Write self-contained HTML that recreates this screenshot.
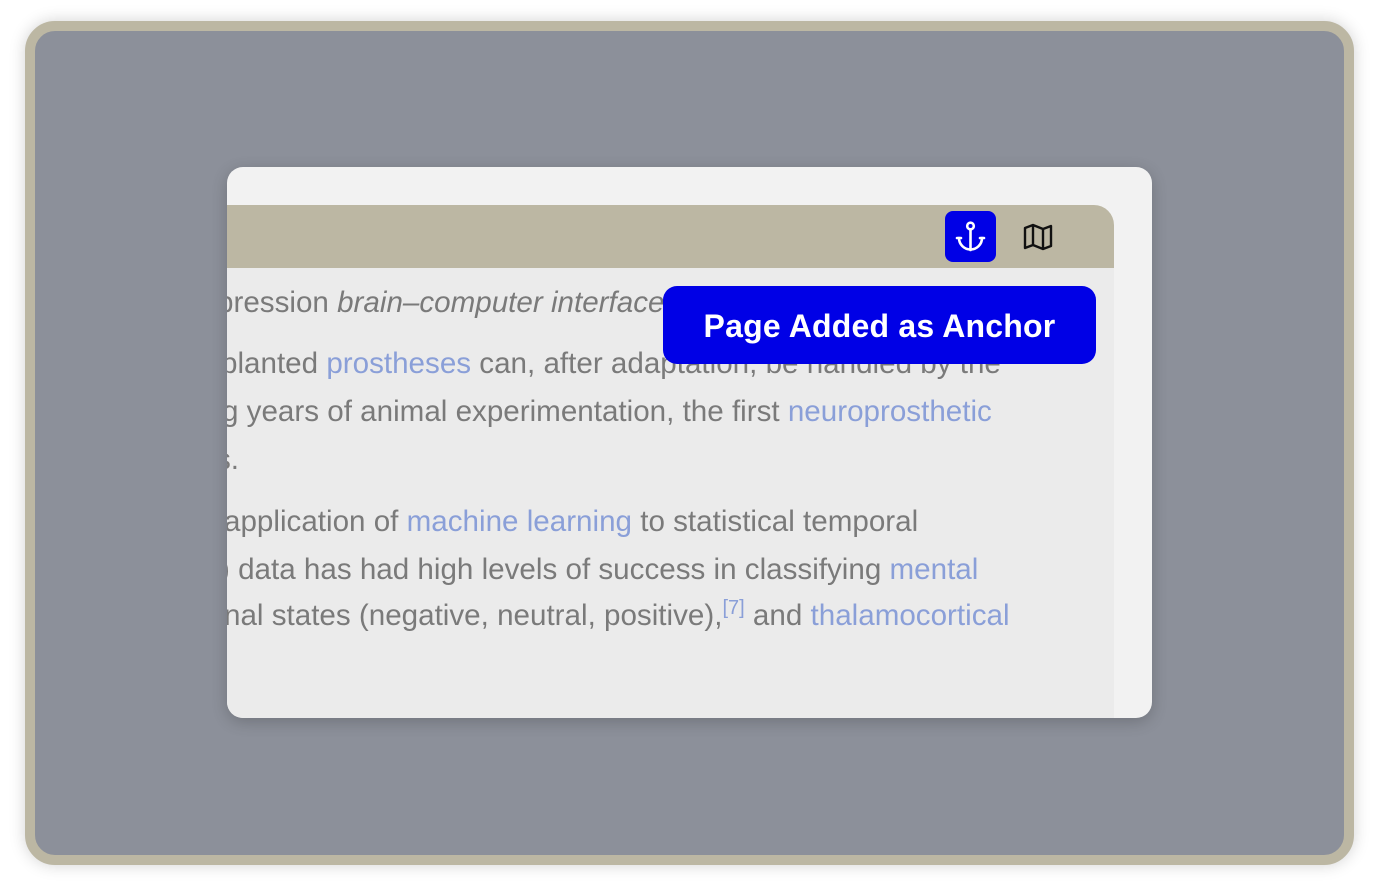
<!DOCTYPE html>
<html><head><meta charset="utf-8"><style>
html,body{margin:0;padding:0;width:1379px;height:894px;background:#fff;overflow:hidden;font-family:"Liberation Sans",Arial,sans-serif}
.frame{position:absolute;left:25px;top:21px;width:1309px;height:824px;border:10px solid #bcb7a3;border-radius:30px;background:#8c909a;box-shadow:0 0 16px rgba(0,0,0,0.18)}
.card{position:absolute;left:227px;top:167px;width:925px;height:551px;background:#f2f2f2;border-radius:16px;overflow:hidden;box-shadow:0 4px 16px rgba(0,0,0,0.2)}
.tb{position:absolute;left:0;top:38px;width:887px;height:63px;background:#bcb7a3;border-top-right-radius:20px}
.content{position:absolute;left:0;top:101px;width:887px;height:450px;background:#ebebeb;overflow:hidden}
.l{position:absolute;white-space:nowrap;font-size:29.6px;color:#7a7a7a;line-height:34px}
.a{color:#8a9fd8}
.btn{position:absolute;left:718px;top:44px;width:51px;height:51px;background:#0000e6;border-radius:8px}
.toast{position:absolute;left:663px;top:286px;width:433px;height:78px;background:#0000e6;border-radius:14px;color:#fff;font-weight:bold;font-size:32px;line-height:80px;text-align:center;letter-spacing:0.2px}
</style></head><body>
<div class="frame"></div>
<div class="card">
 <div class="tb"></div>
 <div class="btn"><svg width="51" height="51" viewBox="0 0 51 51"><g fill="none" stroke="#fff" stroke-width="2.6" stroke-linecap="round"><circle cx="25.5" cy="15" r="3.3"/><line x1="25.5" y1="18.3" x2="25.5" y2="39"/><path d="M14 27 A11.5 11.5 0 0 0 37 27"/><line x1="12" y1="27" x2="16" y2="27"/><line x1="35" y1="27" x2="39" y2="27"/></g></svg></div>
 <svg style="position:absolute;left:796px;top:55px" width="30" height="30" viewBox="0 0 30 30"><path d="M2 6 L10 3 L20 7 L28 4 L28 24 L20 27 L10 23 L2 26 Z M10 3 L10 23 M20 7 L20 27" fill="none" stroke="#111" stroke-width="2.4" stroke-linejoin="round"/></svg>
 <div class="content">
  <div class="l" style="left:-10px;top:18px">pression <i>brain–computer interface</i></div>
  <div class="l" style="left:-6px;top:79px">planted <span class="a">prostheses</span> can, after adaptation, be handled by the</div>
  <div class="l" style="left:-5px;top:127px">g years of animal experimentation, the first <span class="a">neuroprosthetic</span></div>
  <div class="l" style="left:-11px;top:175px">s.</div>
  <div class="l" style="left:-3px;top:237px">application of <span class="a">machine learning</span> to statistical temporal</div>
  <div class="l" style="left:-7px;top:285px">) data has had high levels of success in classifying <span class="a">mental</span></div>
  <div class="l" style="left:-3px;top:331px">nal states (negative, neutral, positive),<sup class="a" style="font-size:20px;vertical-align:11px;line-height:0">[7]</sup> and <span class="a">thalamocortical</span></div>
 </div>
</div>
<div class="toast">Page Added as Anchor</div>
</body></html>
